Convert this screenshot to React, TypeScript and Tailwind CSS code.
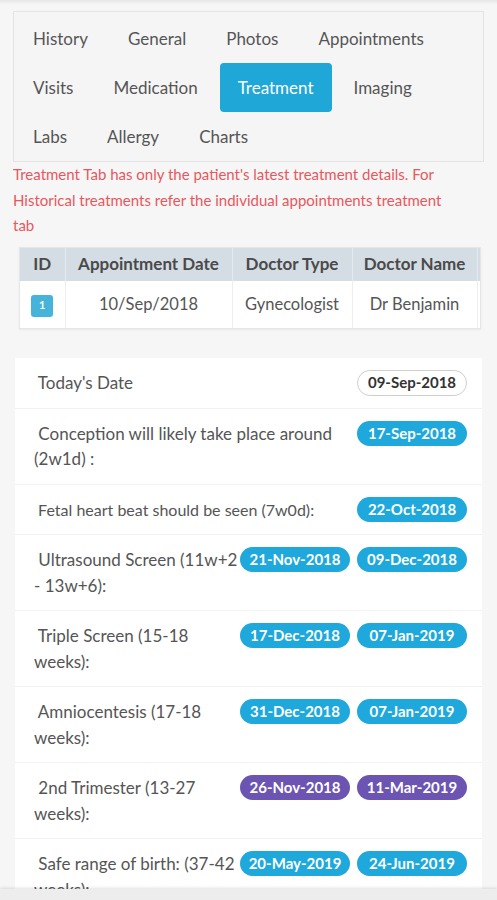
import React from "react";

const tabs = [
  ["History", "General", "Photos", "Appointments"],
  ["Visits", "Medication", "Treatment", "Imaging"],
  ["Labs", "Allergy", "Charts"],
];

type Row = { label: string; dates: string[]; tone?: "blue" | "purple"; small?: boolean };

const rows: Row[] = [
  { label: "\u00a0Conception will likely take place around (2w1d) :", dates: ["17-Sep-2018"] },
  { label: "\u00a0Fetal heart beat should be seen (7w0d):", dates: ["22-Oct-2018"], small: true },
  { label: "\u00a0Ultrasound Screen (11w+2 - 13w+6):", dates: ["21-Nov-2018", "09-Dec-2018"] },
  { label: "\u00a0Triple Screen (15-18 weeks):", dates: ["17-Dec-2018", "07-Jan-2019"] },
  { label: "\u00a0Amniocentesis (17-18 weeks):", dates: ["31-Dec-2018", "07-Jan-2019"] },
  { label: "\u00a02nd Trimester (13-27 weeks):", dates: ["26-Nov-2018", "11-Mar-2019"], tone: "purple" },
  { label: "\u00a0Safe range of birth: (37-42 weeks):", dates: ["20-May-2019", "24-Jun-2019"] },
];

export default function App() {
  return (
    <div className="relative h-[900px] overflow-hidden bg-[#f6f6f6] font-['Lato',sans-serif] text-[#555]">
      {/* top shadow strip */}
      <div className="h-[4px] bg-gradient-to-b from-[#e6e6e6] to-[#f3f3f3]" />

      <div className="px-[13px] pt-[7px]">
        {/* Tabs */}
        <div className="border border-[#e3e3e3] bg-[#f5f5f5] px-px pt-[2px]">
          {tabs.map((row, i) => (
            <div key={i} className="flex gap-[4px]">
              {row.map((t) => {
                const active = t === "Treatment";
                return (
                  <div
                    key={t}
                    className={`flex h-[49px] items-center rounded-[4px] px-[18px] text-[17px] ${
                      active ? "bg-[#1fa7d7] text-white" : "text-[#555]"
                    }`}
                  >
                    {t}
                  </div>
                );
              })}
            </div>
          ))}
        </div>

        {/* Notice */}
        <p className="w-[452px] text-[15px] leading-[25.5px] text-[#e9565e]">
          Treatment Tab has only the patient's latest treatment details. For Historical treatments refer the
          individual appointments treatment tab
        </p>

        {/* Appointment table */}
        <div className="ml-[6px] mr-[3px] mt-[8px] overflow-hidden border border-[#e6e6e6] bg-white shadow-[0_1px_2px_rgba(0,0,0,0.06)]">
          <table className="w-[470px] table-fixed border-collapse text-center">
            <thead>
              <tr className="h-[33px] bg-[#d4dce4] text-[17px] font-bold text-[#4a4a4a]">
                <th className="w-[45px] border-r border-[#e4e9ee]">ID</th>
                <th className="w-[167px] border-r border-[#e4e9ee]">Appointment Date</th>
                <th className="w-[120px] border-r border-[#e4e9ee]">Doctor Type</th>
                <th className="w-[125px] border-r border-[#e4e9ee]">Doctor Name</th>
                <th className="w-[13px]"></th>
              </tr>
            </thead>
            <tbody>
              <tr className="h-[47px] text-[16.5px] text-[#555]">
                <td className="border-r border-[#eee]">
                  <span className="inline-flex h-[22px] w-[22px] items-center justify-center rounded-[3px] bg-[#45b3da] text-[11px] font-bold text-white">
                    1
                  </span>
                </td>
                <td className="border-r border-[#eee]">10/Sep/2018</td>
                <td className="border-r border-[#eee]">Gynecologist</td>
                <td className="border-r border-[#eee]">Dr Benjamin</td>
                <td></td>
              </tr>
            </tbody>
          </table>
        </div>

        {/* Dates card */}
        <div className="mx-[2px] mt-[29px] bg-white">
          <div className="flex items-start border-b border-[#f2f2f2] py-3 pl-[19px] pr-[15px]">
            <span className="flex-1 text-[17px] leading-[25px]">{"\u00a0"}Today's Date</span>
            <span className="flex h-[26px] w-[110px] items-center justify-center rounded-full border border-[#cfcfcf] text-[15px] font-bold text-[#333]">
              09-Sep-2018
            </span>
          </div>
          {rows.map((r) => (
            <div key={r.label} className="flex items-start gap-[2px] border-b border-[#f2f2f2] py-3 pl-[19px] pr-[15px]">
              <span className={`flex-1 leading-[25.5px] ${r.small ? "text-[16px]" : "text-[17px]"}`}>{r.label}</span>
              <div className="flex shrink-0 gap-[7px]">
                {r.dates.map((d) => (
                  <span
                    key={d}
                    className={`flex h-[25px] w-[110px] items-center justify-center rounded-full text-[15px] font-bold text-white ${
                      r.tone === "purple" ? "bg-[#6c55b2]" : "bg-[#1ea8dc]"
                    }`}
                  >
                    {d}
                  </span>
                ))}
              </div>
            </div>
          ))}
        </div>
      </div>

      {/* bottom bar */}
      <div className="absolute bottom-0 left-0 right-0 h-[11px] bg-[#ededed] shadow-[0_-1px_3px_rgba(0,0,0,0.12)]" />
    </div>
  );
}
